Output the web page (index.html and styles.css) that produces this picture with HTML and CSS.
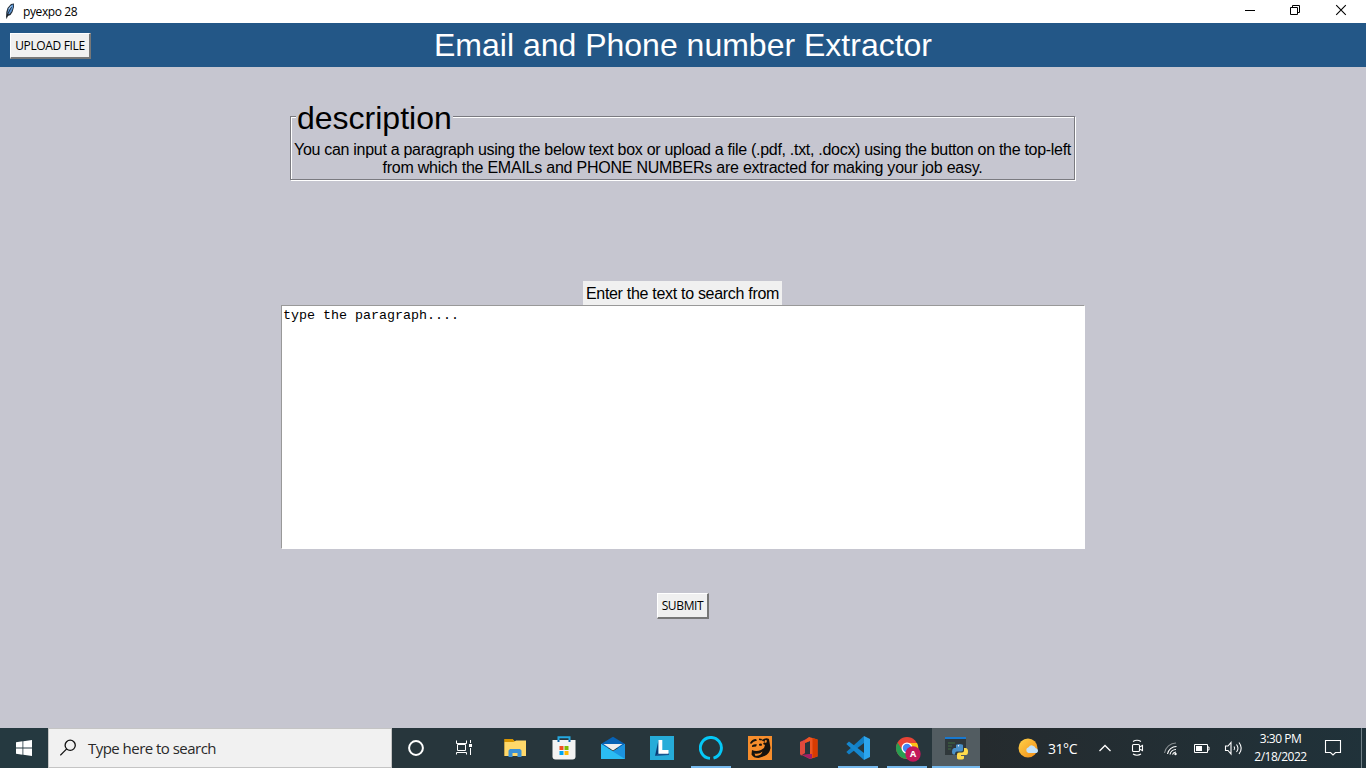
FILE: index.html
```html
<!DOCTYPE html>
<html lang="en">
<head>
<meta charset="utf-8">
<title>pyexpo 28</title>
<link rel="stylesheet" href="styles.css">
</head>
<body>
<div class="titlebar">
  <svg class="feather" width="10" height="17" viewBox="0 0 10 17"><path d="M1 15L1.300 9 2.500 5 6 1 9 .5 9 4 7.500 9 5.500 12 3 13z" fill="#26313c"/><path d="M2.300 10.500L3.500 5.500 6.500 2 8.300 1.500 8 4.500 6.500 8.500 4.500 11z" fill="#5c96d6"/><path d="M1.500 15.500L3 10.500 6.500 4" fill="none" stroke="#15191e" stroke-width=".8"/><path d="M4 6l2.200-3" stroke="#b9d5ef"/></svg>
  <span class="app-name">pyexpo 28</span>
  <div class="controls">
    <svg width="46" height="23" viewBox="0 0 46 23"><path d="M18 10.500h10" stroke="#000"/></svg>
    <svg width="46" height="23" viewBox="0 0 46 23" fill="none" stroke="#000"><path d="M17.500 7.500h7v7h-7zM19.500 7.500v-2h7v7h-2"/></svg>
    <svg width="46" height="23" viewBox="0 0 46 23"><path d="M17.200 5.200l9.600 9.600M26.800 5.200l-9.600 9.600" stroke="#000" stroke-width="1.100"/></svg>
  </div>
</div>
<header class="banner">
  <button class="tk-button upload">UPLOAD FILE</button>
  <h1 class="heading">Email and Phone number Extractor</h1>
</header>
<main class="window">
  <fieldset class="about">
    <legend>description</legend>
    <p class="line-one">You can input a paragraph using the below text box or upload a file (.pdf, .txt, .docx) using the button on the top-left</p>
    <p class="line-two">from which the EMAILs and PHONE NUMBERs are extracted for making your job easy.</p>
  </fieldset>
  <label class="prompt">Enter the text to search from</label>
  <div class="textbox">type the paragraph....</div>
  <button class="tk-button submit">SUBMIT</button>
</main>
<footer class="taskbar">
  <div class="start"><svg width="16" height="16" viewBox="0 0 16 16" fill="#fff"><path d="M0 2.200l6.500-.9v6.200H0zM7.300 1.200L16 0v7.500H7.300zM0 8.400h6.500v6.300L0 13.800zM7.300 8.400H16V16l-8.700-1.200z"/></svg></div>
  <div class="search">
    <svg width="18" height="18" viewBox="0 0 18 18" fill="none" stroke="#111" stroke-width="1.300"><circle cx="10.200" cy="6.300" r="5.100"/><path d="M6.700 9.900L.3 16.300"/></svg>
    <span>Type here to search</span>
  </div>
  <div class="task narrow"><svg width="18" height="18" viewBox="0 0 18 18"><circle cx="9" cy="9" r="6.900" fill="none" stroke="#fff" stroke-width="2"/></svg></div>
  <div class="task view"><svg width="18" height="18" viewBox="0 0 18 18"><g fill="none" stroke="#fff"><path d="M.5 1.500v3h10v-3M.5 15.500v-2h10v2M1.500 5.500h8v6h-8zM14.500 1v3M14.500 9v7"/></g><path d="M13 5h3v3h-3z" fill="#fff"/></svg></div>
  <div class="task"><svg width="24" height="24" viewBox="0 0 24 24"><path d="M1.500 3h8l2 2H23v15H1.500z" fill="#e6a817"/><path d="M1.500 6H11l2-1.500h10V20H1.500z" fill="#ffd86a"/><path d="M1.500 3h8l1.500 2-1 1H1.500z" fill="#d99500"/><path d="M5.500 21v-6.500L7 13h10l1.500 1.500V21h-4v-4h-5v4z" fill="#3c91d5"/></svg></div>
  <div class="task"><svg width="24" height="24" viewBox="0 0 24 24"><path d="M6.500 6V1.200h11V6" fill="none" stroke="#24a9e1" stroke-width="2"/><path d="M.5 4h23v16.500q0 3-3 3h-17q-3 0-3-3z" fill="#f3f3f3"/><path d="M5.500 4h2v2h-2zM16.500 4h2v2h-2z" fill="#0b64a7"/><path d="M7.500 10h4v4h-4z" fill="#f15022"/><path d="M12.500 10h4v4h-4z" fill="#7fba00"/><path d="M7.500 15h4v4h-4z" fill="#00a4ef"/><path d="M12.500 15h4v4h-4z" fill="#ffb900"/></svg></div>
  <div class="task"><svg width="24" height="24" viewBox="0 0 24 24"><path d="M0 8L12 .8 24 8v4H0z" fill="#0762b5"/><path d="M0 8l12 7.500L24 8v15H0z" fill="#27b4ef"/><path d="M2.500 8h19L12 14.500z" fill="#eee"/><path d="M12 15.500L24 23H0V8z" fill="#2bbcf2"/><path d="M12 15.500L24 8v15z" fill="#1c93df"/></svg></div>
  <div class="task"><svg width="24" height="24" viewBox="0 0 24 24"><path d="M0 0h24v24H0z" fill="#26acd9"/><path d="M8.500 4v14L5 20z" fill="#0b3b76"/><path d="M5 20l4-3h10v2z" fill="#16558f"/><path d="M8.500 4h3.800v10h6.200v3.800h-10z" fill="#fff"/></svg></div>
  <div class="task running"><svg width="24" height="24" viewBox="0 0 24 24"><path d="M11 22.400A10.500 10.500 0 1 1 14.500 22.100" fill="none" stroke="#05c8f7" stroke-width="2.900"/></svg></div>
  <div class="task"><svg width="24" height="24" viewBox="0 0 24 24"><path d="M0 0h24v24H0z" fill="#f68d2c"/><path d="M2 7q2-4 6-4l1 1.500Q5 5 3 8zM11 2.500l3 .5-.5 1.500-2.500-.5zM4 9.500q3-2 5-1l-1 2-4 .5zM11 8q2-1 3 0l-.5 2-2.500-.5z" fill="#15130f"/><path d="M14 4q4-3 7-1l1.500 9q-1 6-6 8l-6 2q-5 0-7-3.500L4 14q4 2 9 0l3-2 1-3-2-1 1.500-2.500-2-.5z" fill="#15130f"/><path d="M6.500 17.500q5 1 8-2-1 4-7 4.500zM17 4l2 .5-.5 2-2 .5z" fill="#f68d2c"/></svg></div>
  <div class="task"><svg width="24" height="24" viewBox="0 0 24 24"><path d="M3 6l10-5v4L8 7v10l-4 2.500-1-2z" fill="#b5245f"/><path d="M3 6l5-2v13l-4 2.500-1-2z" fill="#df4a3d"/><path d="M12 1l8.500 2.500v17L13 23l-8-4 8-.5V5L8 7V4z" fill="#ee5622"/><path d="M5 19l8-1h2v4.500l-2 .5z" fill="#a51d68"/><path d="M15.500 2l5 1.500v17l-5 1.500z" fill="#d83b01"/></svg></div>
  <div class="task running"><svg width="24" height="24" viewBox="0 0 24 24"><path d="M18 0l6 3v18l-6 3z" fill="#2ca5ed"/><path d="M18 0v7L3 18.500.3 16z" fill="#127fc5"/><path d="M.3 8L3 5.500 18 17v7z" fill="#1687ce"/></svg></div>
  <div class="task running"><svg class="chrome" width="26" height="26" viewBox="0 0 26 26"><circle cx="12" cy="12" r="11" fill="#e84436"/><path d="M2.500 6.500A11 11 0 0 0 11.500 23L16 15l-8 0z" fill="#279e51"/><path d="M12 7h10a11 11 0 0 1-10.500 16l5-8z" fill="#fbc116"/><circle cx="12" cy="12" r="5.500" fill="#fff"/><circle cx="12" cy="12" r="4.200" fill="#4285f4"/><circle cx="18" cy="18" r="7.700" fill="#c2185b"/><text class="badge-letter" x="18" y="21.200" text-anchor="middle">A</text></svg></div>
  <div class="task running active"><svg width="24" height="24" viewBox="0 0 24 24"><path d="M1 1h21v18H1z" fill="#30383b"/><path d="M1 1h21v2H1z" fill="#1979d0"/><path d="M4 7h7M4 10h4M4 13h3" stroke="#416e40"/><path d="M12 12V9.500Q12 8 15.500 8T19 9.500V14q0 1.500-2 1.500h-4q-2 0-2 3H9.500Q8 18.500 8 15.500T10 12h5z" fill="#4a8fc7"/><path d="M20 12h1.500q2.500 0 2.500 3.500t-2 3.500h-5v1h3v2q0 1.500-3.500 1.500T13 22v-3.500q0-2 2-2h3q2 0 2-2z" fill="#ffdb4c"/><circle cx="14.500" cy="9.700" r=".7" fill="#fff"/></svg></div>
  <div class="tray">
    <div class="weather">
      <svg width="22" height="22" viewBox="0 0 22 22"><defs><linearGradient id="sun" x1="0" y1="0" x2="1" y2="1"><stop stop-color="#ffd349"/><stop offset="1" stop-color="#f28b16"/></linearGradient></defs><circle cx="10" cy="11" r="9.500" fill="url(#sun)"/><path d="M10.500 16a3 3 0 0 1 0-5.800 4 4 0 0 1 7.200 1 2.500 2.500 0 0 1 .8 4.800z" fill="#c3e2fa"/></svg>
      <span>31°C</span>
    </div>
    <svg width="32" height="40" viewBox="0 0 32 40"><path d="M10.500 23l5.500-5.500 5.500 5.500" fill="none" stroke="#fff" stroke-width="1.300"/></svg>
    <svg width="32" height="40" viewBox="0 0 32 40" fill="none" stroke="#fff" stroke-width="1.100"><rect x="11.500" y="16.500" width="7" height="7" rx="1"/><path d="M18.500 19l3-1.500v5l-3-1.500M12 13.500q4-2.500 8 0M12 26q4 2.500 8 0"/></svg>
    <svg width="34" height="40" viewBox="0 0 34 40" fill="none" stroke="#fff" stroke-width="1.100"><path d="M12.500 26a12 12 0 0 1 11.500-10" opacity=".45" transform="translate(-1 -1)"/><path d="M14.500 26a9 9 0 0 1 9-7.500M17 26.500a6 6 0 0 1 6-5M19.500 26.500a4 4 0 0 1 3.500-2.500"/><circle cx="22.500" cy="26" r="1.200" fill="#fff" stroke="none"/></svg>
    <svg width="30" height="40" viewBox="0 0 30 40"><path d="M7.500 16.500h13v8h-13zM21 19h1v3h-1" fill="none" stroke="#fff"/><path d="M9 18h6v5H9z" fill="#fff"/></svg>
    <svg width="32" height="40" viewBox="0 0 32 40" fill="none" stroke="#fff" stroke-width="1.100"><path d="M8.500 18v4.500H11l3 3.500V14.500L11 18zM17 18.500q1.500 1.800 0 3.500M19.500 16.500q3 3.800 0 7.500M22 14.500q4.500 5.800 0 11.500"/></svg>
    <div class="clock"><span>3:30 PM</span><span>2/18/2022</span></div>
    <svg width="56" height="40" viewBox="0 0 56 40" fill="none"><path d="M16.500 12.500h15v12h-5l-2.500 2.500-2.500-2.500h-5z" stroke="#fff" stroke-width="1.100"/><path d="M52.500 0v40" stroke="#718087"/></svg>
  </div>
</footer>
</body>
</html>
```

FILE: styles.css
```css
* { box-sizing: border-box; }
body {
  margin: 0;
  width: 1366px;
  height: 768px;
  overflow: hidden;
  display: flex;
  flex-direction: column;
  background: #c6c6d0;
  color: #000;
  font-family: "Liberation Sans", Arial, sans-serif;
}
svg { display: block; flex: none; }
.titlebar {
  height: 23px;
  flex: none;
  display: flex;
  align-items: center;
  background: #fff;
  padding-left: 5px;
}
.app-name { margin-left: 8px; font: 12px/22px "Open Sans", sans-serif; letter-spacing: -.4px; }
.controls { display: flex; margin-left: auto; margin-right: 1px; }
.banner {
  height: 44px;
  flex: none;
  display: grid;
  grid-template-columns: 81px 1fr 81px;
  padding: 0 10px;
  align-items: center;
  background: #235787;
  color: #fff;
}
.heading { margin: 0; text-align: center; font-size: 32px; line-height: 44px; font-weight: 400; white-space: nowrap; }
.tk-button {
  height: 26px;
  padding: 0;
  border: solid;
  border-width: 1px 2px 2px 1px;
  border-color: #fff #777 #777 #fff;
  background: #f0f0f0;
  color: #000;
  font: 12px/22px "Open Sans", sans-serif;
  letter-spacing: -.35px;
  white-space: nowrap;
}
.upload { width: 81px; margin-top: 1px; padding-top: 1px; }
.window { flex: 1; display: flex; flex-direction: column; align-items: center; }
.about {
  width: 785px;
  height: 80px;
  margin: 33px 1px 0 0;
  padding: 0;
  border: 1px solid #7a7a80;
  box-shadow: 1px 1px 0 #fff, inset 1px 1px 0 #fff;
  min-width: 0;
  text-align: center;
  font-size: 16px;
  line-height: 18px;
  white-space: nowrap;
}
.about legend {
  margin-left: 5px;
  padding: 0 1px;
  background: #c6c6d0;
  text-align: left;
  font-size: 32px;
  line-height: 33px;
  transform: translateY(2px);
}
.about p { margin: 0; }
.line-one { letter-spacing: -.295px; padding-top: 8px; }
.line-two { letter-spacing: -.235px; }
.prompt {
  width: 199px;
  height: 24px;
  margin: 101px 1px 0 0;
  text-align: center;
  background: #f0f0f0;
  font-size: 16px;
  line-height: 25px;
  letter-spacing: -.3px;
  white-space: nowrap;
}
.textbox {
  width: 804px;
  height: 244px;
  padding: 2px 1px;
  background: #fff;
  border: 1px solid #fff;
  border-top-color: #999;
  border-left-color: #999;
  font: 13.333px/15px "Liberation Mono", monospace;
}
.submit { width: 52px; margin-top: 44px; }
.taskbar { height: 40px; flex: none; display: flex; color: #fff; background: #27363c; }
.start { width: 48px; display: grid; place-items: center; background: #253940; }
.search {
  width: 344px;
  display: flex;
  align-items: center;
  padding-left: 11px;
  background: #f1f1f1;
  border: 1px solid #c4c4c4;
  color: #292929;
  font: 15px "Open Sans", sans-serif;
}
.search span { margin-left: 10px; letter-spacing: -.53px; white-space: nowrap; }
.task { width: 49px; flex: none; display: grid; place-items: center; }
.narrow { width: 48px; }
.view { width: 50px; }
.running { background: linear-gradient(#76b9ed, #76b9ed) center bottom / 40px 2px no-repeat; }
.active { background: linear-gradient(#76b9ed, #76b9ed) right bottom / 48px 2px no-repeat, linear-gradient(#525c61, #525c61) right top / 48px 40px no-repeat; }
.chrome { margin: 2px 0 0 2px; }
.badge-letter { font: bold 9px "Open Sans", sans-serif; fill: #fff; }
.tray { flex: 1; display: flex; padding-left: 38px; background: linear-gradient(90deg, #252b2e, #20323a); }
.weather { display: flex; align-items: center; width: 71px; font: 14px "Open Sans", sans-serif; letter-spacing: -.45px; }
.weather span { margin-left: 8px; }
.clock {
  width: 60px;
  display: flex;
  flex-direction: column;
  align-items: center;
  padding: 2px 0 0 3px;
  font: 12px/18px "Open Sans", sans-serif;
  letter-spacing: -.5px;
  white-space: nowrap;
}
```
